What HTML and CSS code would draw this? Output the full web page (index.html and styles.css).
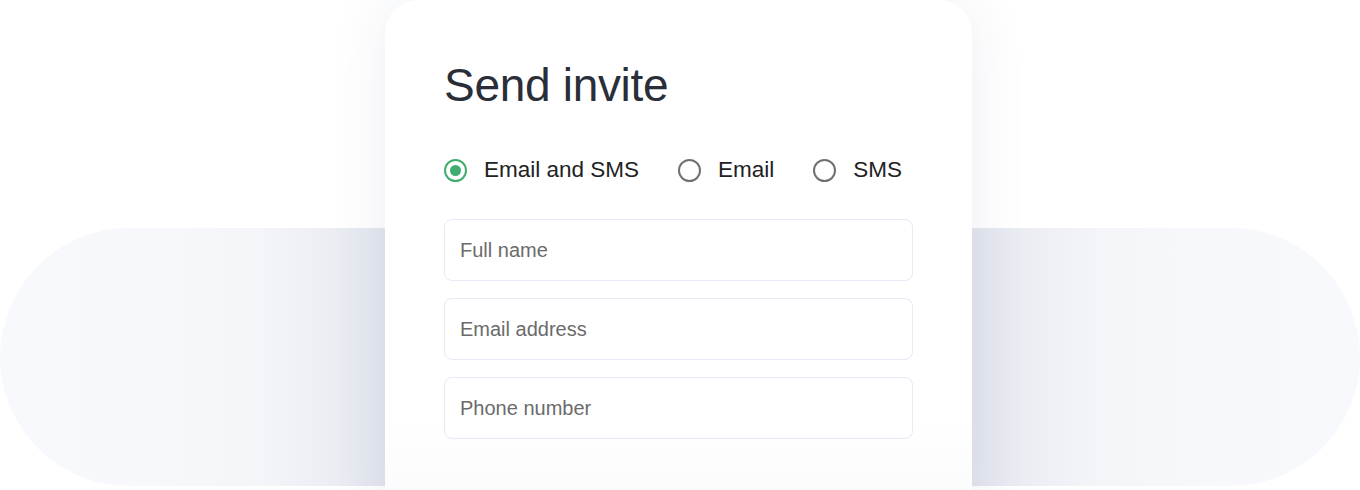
FILE: index.html
```html
<!DOCTYPE html>
<html lang="en">
<head>
    <meta charset="UTF-8">
    <meta name="viewport" content="width=device-width, initial-scale=1.0">
    <title>Send invite</title>
    <link rel="stylesheet" href="styles.css">
</head>
<body>

<div class="stage">
    <div class="backdrop"></div>

    <div class="card">
        <h2>Send invite</h2>

        <div class="channels">
            <label class="channel">
                <input type="radio" name="channel" value="both" checked>
                <span>Email and SMS</span>
            </label>
            <label class="channel">
                <input type="radio" name="channel" value="email">
                <span>Email</span>
            </label>
            <label class="channel">
                <input type="radio" name="channel" value="sms">
                <span>SMS</span>
            </label>
        </div>

        <input type="text" class="field" placeholder="Full name">
        <input type="email" class="field" placeholder="Email address">
        <input type="text" class="field" placeholder="Phone number">
    </div>
</div>

</body>
</html>
```

FILE: styles.css
```css
/* General Styles */
body {
    font-family: "Liberation Sans", Arial, sans-serif;
    background-color: #ffffff;
    margin: 0;
}

.stage {
    display: grid;
    width: 1360px;
    height: 490px;
    overflow: hidden;
}

/* Soft pill behind the card */
.backdrop {
    grid-area: 1 / 1;
    align-self: start;
    margin-top: 228px;
    height: 258px;
    border-radius: 129px;
    background: linear-gradient(90deg,
        #f8f9fd 0%,
        #f7f8fc 12%,
        #f3f5f9 19%,
        #eceef4 24%,
        #e3e6ee 28.3%,
        #e3e6ee 71.5%,
        #eceef4 76%,
        #f3f5f9 81%,
        #f7f8fc 88%,
        #f8f9fd 100%);
}

.card {
    grid-area: 1 / 1;
    justify-self: center;
    align-self: start;
    width: 587px;
    height: 540px;
    margin-right: 3px;
    box-sizing: border-box;
    padding: 62px 59px 0;
    background: linear-gradient(180deg, #ffffff 78%, #f8f9fb 100%);
    border-radius: 34px;
    box-shadow: 0 0 60px rgba(40, 55, 100, 0.08);
}

h2 {
    margin: 0;
    font-size: 46px;
    font-weight: 400;
    line-height: 46px;
    color: #2a2e38;
    letter-spacing: -0.3px;
}

.channels {
    display: flex;
    align-items: center;
    gap: 39px;
    height: 24px;
    margin: 50px 0 37px;
}

.channel {
    display: flex;
    align-items: center;
    gap: 17px;
    font-size: 22.5px;
    color: #222222;
    cursor: pointer;
}

.channel input {
    appearance: none;
    margin: 0;
    width: 23px;
    height: 23px;
    border: 2px solid #707070;
    border-radius: 50%;
    box-sizing: border-box;
    display: grid;
    place-items: center;
}

.channel input:checked {
    border-color: #40ad70;
}

.channel input:checked::after {
    content: "";
    width: 11px;
    height: 11px;
    border-radius: 50%;
    background-color: #40ad70;
}

.field {
    display: block;
    width: 100%;
    height: 62px;
    margin: 0 0 17px;
    padding: 0 15px;
    border: 1px solid #e6eaf4;
    border-radius: 8px;
    box-sizing: border-box;
    font-family: inherit;
    font-size: 20px;
    color: #222222;
    background: #ffffff;
}

.field::placeholder {
    color: #6b6b6b;
}
```
